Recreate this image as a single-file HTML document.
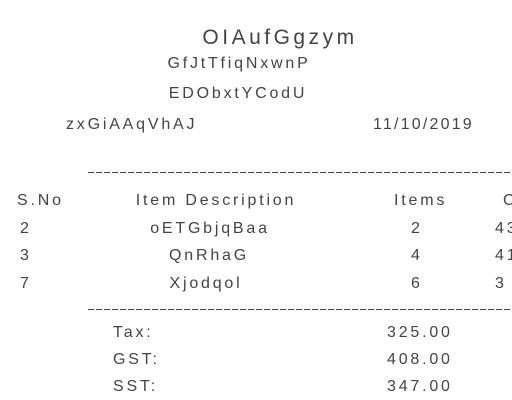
<!DOCTYPE html>
<html><head><meta charset="utf-8"><style>
html,body{margin:0;padding:0;background:#fff;width:512px;height:400px;overflow:hidden;position:relative}
body{font-family:"Liberation Sans",sans-serif;color:#444;font-size:16px;letter-spacing:2.8px}
.t{position:absolute;white-space:nowrap;line-height:1}
.c{transform:translateX(-50%)}
.d{position:absolute;left:88px;right:0;height:1px;background:repeating-linear-gradient(90deg,#444 0 6px,transparent 6px 8px)}
</style></head><body>
<div class="t c" style="left:280px;top:27px;font-size:21px;letter-spacing:3.5px">OIAufGgzym</div>
<div class="t c" style="left:239px;top:56px">GfJtTfiqNxwnP</div>
<div class="t c" style="left:238px;top:86px">EDObxtYCodU</div>
<div class="t" style="left:66px;top:117px">zxGiAAqVhAJ</div>
<div class="t" style="left:373px;top:117px;letter-spacing:2.2px">11/10/2019</div>
<div class="d" style="top:172px"></div>
<div class="t" style="left:17px;top:193px">S.No</div>
<div class="t c" style="left:216px;top:193px">Item Description</div>
<div class="t" style="left:394px;top:193px">Items</div>
<div class="t" style="left:503px;top:193px">C</div>
<div class="t" style="left:20px;top:221px">2</div>
<div class="t c" style="left:210px;top:221px">oETGbjqBaa</div>
<div class="t" style="left:411px;top:221px">2</div>
<div class="t" style="left:495px;top:221px">43</div>
<div class="t" style="left:20px;top:248px">3</div>
<div class="t c" style="left:209px;top:248px">QnRhaG</div>
<div class="t" style="left:411px;top:248px">4</div>
<div class="t" style="left:495px;top:248px">41</div>
<div class="t" style="left:20px;top:276px">7</div>
<div class="t c" style="left:206px;top:276px">Xjodqol</div>
<div class="t" style="left:411px;top:276px">6</div>
<div class="t" style="left:495px;top:276px">3</div>
<div class="d" style="top:309px"></div>
<div class="t" style="left:113px;top:325px">Tax:</div>
<div class="t" style="left:387px;top:325px">325.00</div>
<div class="t" style="left:113px;top:352px">GST:</div>
<div class="t" style="left:387px;top:352px">408.00</div>
<div class="t" style="left:113px;top:379px">SST:</div>
<div class="t" style="left:387px;top:379px">347.00</div>
</body></html>
